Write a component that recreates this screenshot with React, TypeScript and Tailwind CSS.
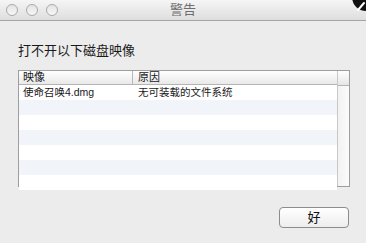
import React from "react";

const font = { fontFamily: '"Liberation Sans", "Noto Sans CJK SC", sans-serif' };

function Light() {
  return <div className="w-[12px] h-[12px] rounded-full border border-[#a9a9a9] bg-gradient-to-b from-[#e4e4e4] to-[#f7f7f7]" />;
}

export default function App() {
  const stripes = [false, true, false, true, false, true, false];
  return (
    <div className="relative w-[366px] h-[243px] overflow-hidden bg-[#ececec] text-[#1a1a1a]" style={font}>
      {/* 타이틀바 */}
      <div className="relative h-[21px] flex items-center border-b border-[#a4a4a4] bg-gradient-to-b from-[#f5f5f5] to-[#dedede]">
        <div className="flex gap-[8px] pl-[6px]">
          <Light />
          <Light />
          <Light />
        </div>
        <div className="absolute inset-0 flex items-center justify-center text-[13px] text-[#6e6e6e]">警告</div>
      </div>

      {/* 구석 아이콘 */}
      <svg className="absolute top-0 right-0" width="16" height="12" viewBox="0 0 16 12">
        <circle cx="16" cy="-3" r="14" fill="#111" />
        <path d="M8 10 L14 3" stroke="#fff" strokeWidth="2" strokeLinecap="round" />
      </svg>

      <div className="pl-[18px] pr-[16px]">
        <div className="mt-[22px] text-[13px] leading-[16px]">打不开以下磁盘映像</div>

        {/* 테이블 */}
        <div className="mt-[11px] w-[332px] h-[117px] border border-[#9e9e9e] bg-white flex text-[11px]">
          <div className="flex-1 flex flex-col">
            <div className="h-[15px] flex items-center border-b border-[#b4b4b4] bg-gradient-to-b from-[#ffffff] to-[#e9e9e9]">
              <div className="w-[114px] pl-[4px] border-r border-[#b8b8b8] leading-[13px]">映像</div>
              <div className="pl-[5px] leading-[13px]">原因</div>
            </div>
            {stripes.map((blue, i) => (
              <div key={i} className={`h-[15px] shrink-0 flex items-center text-[10.5px] ${blue ? "bg-[#f1f4f9]" : "bg-white"}`}>
                {i === 0 && (
                  <>
                    <div className="w-[115px] pl-[4px]">使命召唤4.dmg</div>
                    <div className="pl-[4px]">无可装载的文件系统</div>
                  </>
                )}
              </div>
            ))}
          </div>
          {/* 스크롤바 */}
          <div className="w-[12px] border-l border-[#c8c8c8] flex flex-col bg-gradient-to-r from-[#f2f2f2] to-[#fbfbfb]">
            <div className="h-[15px] border-b border-[#b4b4b4] bg-gradient-to-b from-[#ffffff] to-[#e6e6e6]" />
          </div>
        </div>

        <div className="flex justify-end mt-[20px] pr-[1px]">
          <div className="w-[70px] h-[21px] rounded-[4px] border border-[#8c8c8c] bg-gradient-to-b from-[#ffffff] to-[#ededed] flex items-center justify-center text-[13px] text-[#111]">
            好
          </div>
        </div>
      </div>
    </div>
  );
}
